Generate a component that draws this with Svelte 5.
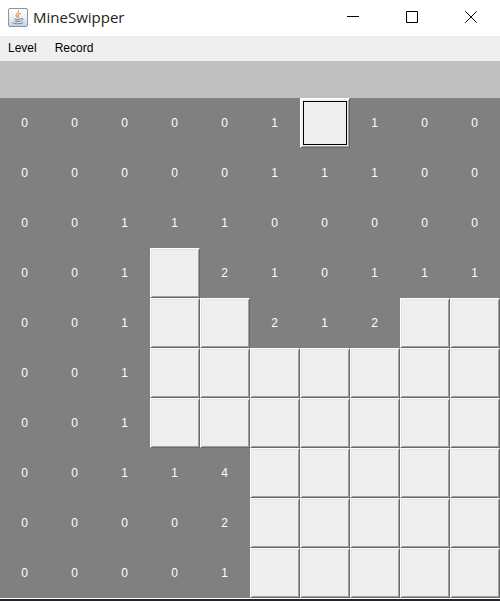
<script>
  // '#' marks a covered cell, '@' the covered cell holding keyboard focus
  const rows = [
    '000001@100',
    '0000011100',
    '0011100000',
    '001#210111',
    '001##212##',
    '001#######',
    '001#######',
    '00114#####',
    '00002#####',
    '00001#####'
  ];
</script>

<div class="window">
  <header class="titlebar">
    <svg class="logo" width="20" height="20" viewBox="0 0 20 20" aria-hidden="true">
      <defs>
        <linearGradient id="tile" x1="0" y1="0" x2="0" y2="1">
          <stop offset="0" stop-color="#ffffff" />
          <stop offset="0.5" stop-color="#eef1f5" />
          <stop offset="1" stop-color="#c3d0de" />
        </linearGradient>
      </defs>
      <rect x="0.5" y="0.5" width="19" height="18" rx="1.5" fill="url(#tile)" stroke="#8795a6" />
      <path d="M10.600 3c.8 1.500-3.200 2.700-2.500 4.500.3.800 1 1.200 1.200 2M12.300 5.500c-1.400.6-2.500 1.200-2 2.200.3.500.6.900.2 1.600" fill="none" stroke="#e8944f" stroke-width="1.200" stroke-linecap="round" />
      <path d="M6 10.300c1.800.8 5 .8 7 0l-.5 1.300c-1.500.6-4.300.6-6 0zM6.700 12.400c1.500.6 4 .6 5.600 0l-.5 1.300c-1.400.4-3.200.4-4.600 0z" fill="#6c87a3" />
      <path d="M13.200 10.400c2.200-.7 2.800 1.600-.2 2.600M4.500 14.600c-.6 1.400 9 1.800 10.500.2" fill="none" stroke="#6c87a3" stroke-linecap="round" />
    </svg>
    <h1>MineSwipper</h1>
    <div class="controls">
      <button aria-label="Minimize">
        <svg width="12" height="12" viewBox="0 0 12 12"><path d="M0 5.500h12" /></svg>
      </button>
      <button aria-label="Maximize">
        <svg width="12" height="12" viewBox="0 0 12 12"><path d="M.5.5h11v11H.5z" /></svg>
      </button>
      <button aria-label="Close">
        <svg width="12" height="12" viewBox="0 0 12 12"><path d="M.3.3l11.400 11.400M11.700.3L.3 11.700" /></svg>
      </button>
    </div>
  </header>

  <nav class="menu">
    <button>Level</button>
    <button>Record</button>
  </nav>

  <div class="status"></div>

  <main class="board">
    {#each rows as row, r}
      {#each row.split('') as cell, c}
        {#if cell === '#' || cell === '@'}
          <button class="tile" class:focused={cell === '@'} aria-label={`Row ${r + 1}, column ${c + 1}`}></button>
        {:else}
          <span class="open">{cell}</span>
        {/if}
      {/each}
    {/each}
  </main>
  <footer class="edge"></footer>
</div>

<style>
  :global(body) {
    margin: 0;
    background: #24252b;
  }

  .window {
    font-family: 'Liberation Sans', Arial, sans-serif;
    font-size: 12px;
    color: #000;
  }

  button {
    margin: 0;
    padding: 0;
    border: 0;
    background: none;
    font: inherit;
    color: inherit;
  }

  .titlebar {
    display: flex;
    align-items: center;
    height: 36px;
    padding-left: 8px;
    background: #fff;
  }

  .logo {
    flex: none;
    margin-right: 5px;
  }

  h1 {
    margin: 0;
    padding-bottom: 2px;
    color: #222;
    font: 400 15px/20px 'Open Sans', 'Noto Sans', sans-serif;
  }

  .controls {
    display: flex;
    align-self: stretch;
    margin-left: auto;
  }

  .controls button {
    display: flex;
    align-items: center;
    justify-content: center;
    width: 59px;
    padding-bottom: 2px;
  }

  .controls path {
    fill: none;
    stroke: #000;
  }

  .menu {
    display: flex;
    align-items: center;
    gap: 18px;
    height: 25px;
    padding: 0 8px;
    box-sizing: border-box;
    background: #efefef;
  }

  .menu button {
    line-height: 16px;
    padding-bottom: 2px;
  }

  .status {
    height: 37px;
    background: #c0c0c0;
  }

  .board {
    display: grid;
    grid-template-columns: repeat(10, 1fr);
    grid-auto-rows: 50px;
    background: #808080;
  }

  .open {
    display: flex;
    align-items: center;
    justify-content: center;
    padding-right: 1px;
    color: #fff;
  }

  .tile {
    border: 1px solid;
    border-color: #fff #696969 #696969 #fff;
    background: #efefef;
    box-shadow: inset 1px 1px #e3e3e3, inset -1px -1px #a0a0a0;
  }

  .tile.focused {
    outline: 1px solid #000;
    outline-offset: -4px;
    box-shadow: inset 1px 1px #f4f4f4, inset -1px -1px #a0a0a0;
  }

  .edge {
    height: 2px;
    border-top: 1px solid #fff;
    background: #24252b;
  }
</style>
